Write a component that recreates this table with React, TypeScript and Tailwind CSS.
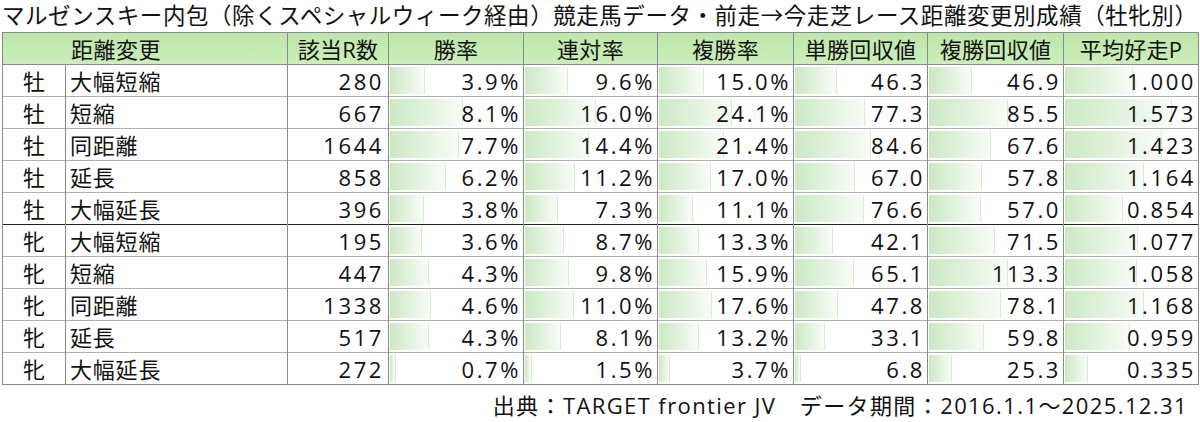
import React from "react";

type Row = [string, string, number, number, number, number, number, number, number];

const rows: Row[] = [
  ["牡", "大幅短縮", 280, 3.9, 9.6, 15.0, 46.3, 46.9, 1.0],
  ["牡", "短縮", 667, 8.1, 16.0, 24.1, 77.3, 85.5, 1.573],
  ["牡", "同距離", 1644, 7.7, 14.4, 21.4, 84.6, 67.6, 1.423],
  ["牡", "延長", 858, 6.2, 11.2, 17.0, 67.0, 57.8, 1.164],
  ["牡", "大幅延長", 396, 3.8, 7.3, 11.1, 76.6, 57.0, 0.854],
  ["牝", "大幅短縮", 195, 3.6, 8.7, 13.3, 42.1, 71.5, 1.077],
  ["牝", "短縮", 447, 4.3, 9.8, 15.9, 65.1, 113.3, 1.058],
  ["牝", "同距離", 1338, 4.6, 11.0, 17.6, 47.8, 78.1, 1.168],
  ["牝", "延長", 517, 4.3, 8.1, 13.2, 33.1, 59.8, 0.959],
  ["牝", "大幅延長", 272, 0.7, 1.5, 3.7, 6.8, 25.3, 0.335],
];

const barScale = [9.0, 4.45, 3.03, 0.9, 0.92, 68];
const barCap = [200, 200, 200, 200, 79, 200];

function fmt(i: number, v: number) {
  if (i < 3) return v.toFixed(1) + "%";
  if (i < 5) return v.toFixed(1);
  return v.toFixed(3);
}

function BarCell({ i, v, top }: { i: number; v: number; top: boolean }) {
  const w = Math.min(v * barScale[i], barCap[i]);
  return (
    <td
      className={`relative border-x border-x-[#8a8a8a] ${top ? "border-t border-t-[#222]" : "border-t border-t-[#b0b0b0]"} p-0 h-[32px]`}
    >
      <div
        className="absolute left-[1px] top-[2px] bottom-[2px] bg-gradient-to-r from-[#cbe9c3] to-[#f8fcf7] border-r border-r-[#d6eecf]"
        style={{ width: `${w}px` }}
      />
      <div className="relative text-right pr-[2px] tracking-[2.6px] leading-[30px]">{fmt(i, v)}</div>
    </td>
  );
}

export default function App() {
  return (
    <div
      className="w-[1200px] h-[422px] bg-white text-[#111] overflow-hidden"
      style={{ fontFamily: '"Open Sans", "Noto Sans CJK JP", sans-serif' }}
    >
      <div className="h-[32px] pl-[2px] text-[22.5px] leading-[32px] whitespace-nowrap tracking-[0.55px]">
        マルゼンスキー内包（除くスペシャルウィーク経由）競走馬データ・前走→今走芝レース距離変更別成績（牡牝別）
      </div>
      <table className="ml-[2px] w-[1196px] table-fixed border-collapse border border-[#8a8a8a] text-[22px]">
        <colgroup>
          <col className="w-[63px]" />
          <col className="w-[222px]" />
          <col className="w-[101px]" />
          <col className="w-[135px]" />
          <col className="w-[134px]" />
          <col className="w-[136px]" />
          <col className="w-[134px]" />
          <col className="w-[136px]" />
          <col className="w-[135px]" />
        </colgroup>
        <thead>
          <tr className="h-[32px] bg-gradient-to-b from-[#bde6a8] to-[#cdeebc]">
            <th colSpan={2} className="border border-[#8a8a8a] text-left pl-[68px] font-normal leading-[30px] tracking-[0.5px]">
              距離変更
            </th>
            {["該当R数", "勝率", "連対率", "複勝率", "単勝回収値", "複勝回収値", "平均好走P"].map((h) => (
              <th key={h} className="border border-[#8a8a8a] font-normal text-center leading-[30px] tracking-[0.3px]">
                {h}
              </th>
            ))}
          </tr>
        </thead>
        <tbody>
          {rows.map((r, ri) => {
            const top = ri === 5;
            const tb = top ? "border-t border-t-[#222]" : "border-t border-t-[#b0b0b0]";
            return (
              <tr key={ri} className="h-[32px]">
                <td className={`border-x border-x-[#8a8a8a] ${tb} text-center p-0 leading-[30px]`}>{r[0]}</td>
                <td className={`border-x border-x-[#8a8a8a] ${tb} p-0 pl-[4px] leading-[30px] tracking-[0.8px]`}>
                  {r[1]}
                </td>
                <td className={`border-x border-x-[#8a8a8a] ${tb} p-0 text-right pr-[4px] tracking-[2.6px] leading-[30px]`}>
                  {r[2]}
                </td>
                {[r[3], r[4], r[5], r[6], r[7], r[8]].map((v, i) => (
                  <BarCell key={i} i={i} v={v} top={top} />
                ))}
              </tr>
            );
          })}
        </tbody>
      </table>
      <div className="text-right pr-[12px] pt-[3px] text-[22px] leading-[34px] whitespace-nowrap tracking-[1.4px]">
        出典：TARGET frontier JV　データ期間：2016.1.1～2025.12.31
      </div>
    </div>
  );
}
